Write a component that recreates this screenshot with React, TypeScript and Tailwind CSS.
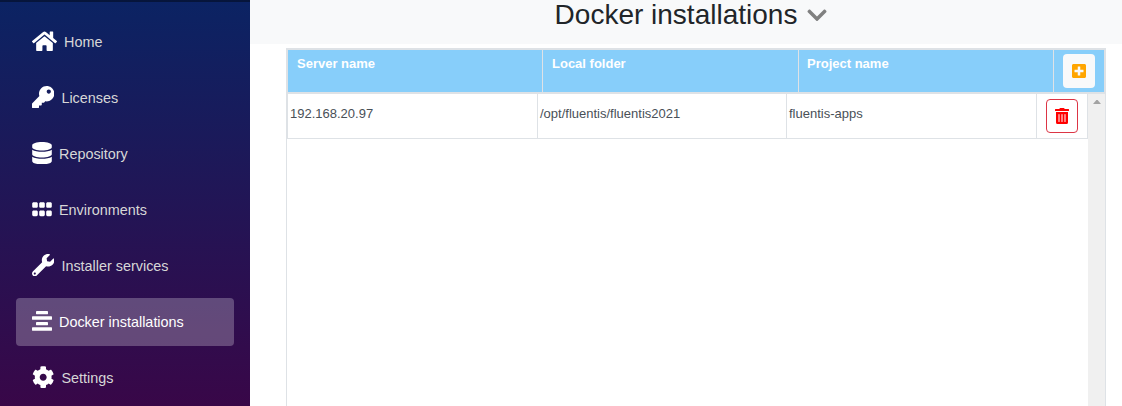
import type { ComponentType } from "react";
import {
  FaChevronDown,
  FaCog,
  FaDatabase,
  FaGripHorizontal,
  FaHome,
  FaKey,
  FaPlusSquare,
  FaTrashAlt,
  FaWrench,
} from "react-icons/fa";

type IconProps = { className?: string };
type NavItem = { label: string; icon: ComponentType<IconProps>; width: string; active?: boolean };

function CenteredBars({ className }: IconProps) {
  return (
    <svg className={className} viewBox="0 0 20 22.4" fill="currentColor">
      <rect x="4" y="1" width="12" height="3.2" rx="0.4" />
      <rect x="0" y="6.3" width="20" height="3.4" rx="0.4" />
      <rect x="4" y="12" width="12" height="3.2" rx="0.4" />
      <rect x="0" y="17.3" width="20" height="3.4" rx="0.4" />
    </svg>
  );
}

const navItems: NavItem[] = [
  { label: "Home", icon: FaHome, width: "w-[25px]" },
  { label: "Licenses", icon: FaKey, width: "w-[22.4px]" },
  { label: "Repository", icon: FaDatabase, width: "w-5" },
  { label: "Environments", icon: FaGripHorizontal, width: "w-5" },
  { label: "Installer services", icon: FaWrench, width: "w-[22.4px]" },
  { label: "Docker installations", icon: CenteredBars, width: "w-5", active: true },
  { label: "Settings", icon: FaCog, width: "w-[22.4px]" },
];

function Sidebar() {
  return (
    <aside className="flex w-[250px] shrink-0 flex-col bg-[linear-gradient(180deg,#052767_-54px,#3a0647_420px)]">
      <div className="h-0.5 shrink-0 bg-black/40" />
      <nav className="flex flex-col gap-2 px-4 pt-4">
        {navItems.map(({ label, icon: Icon, width, active }) => (
          <a
            key={label}
            className={`flex h-12 shrink-0 items-center gap-[7px] rounded-[4px] pl-4 text-[14.4px] ${
              active ? "bg-white/25 text-white" : "text-[#d7d7d7]"
            }`}
          >
            <Icon className={`mb-[2px] h-[22.4px] shrink-0 text-white ${width}`} />
            <span className="pt-[2px]">{label}</span>
          </a>
        ))}
      </nav>
    </aside>
  );
}

function Grid() {
  return (
    <section className="mt-1 ml-9 flex h-[370px] w-[820px] shrink-0 flex-col border border-[#dee2e6] text-[13px]">
      <div className="flex h-[45px] shrink-0 border border-b-2 border-[#dee2e6] bg-[#87cefa] font-bold text-white">
        <div className="w-[255px] border-r border-[#dee2e6] pt-1 pl-[9px]">Server name</div>
        <div className="w-[256px] border-r border-[#dee2e6] pt-1 pl-[9px]">Local folder</div>
        <div className="w-[255px] border-r border-[#dee2e6] pt-1 pl-2">Project name</div>
        <div className="flex flex-1 items-center justify-center">
          <button className="flex h-[34px] w-8 items-center justify-center rounded-[4px] bg-[#f8f9fa]">
            <FaPlusSquare className="size-4 text-[#ffa500]" />
          </button>
        </div>
      </div>
      <div className="flex flex-1">
        <div className="w-[801px]">
          <div className="flex h-[45px] border-r border-b border-l border-[#dee2e6] text-[#495057]">
            <div className="w-[250px] border-r border-[#dee2e6] pt-[10px] pl-0.5">192.168.20.97</div>
            <div className="w-[249px] border-r border-[#dee2e6] pt-[10px] pl-0.5">/opt/fluentis/fluentis2021</div>
            <div className="w-[250px] border-r border-[#dee2e6] pt-[10px] pl-0.5">fluentis-apps</div>
            <div className="flex flex-1 items-center justify-center">
              <button className="flex h-[34px] w-8 items-center justify-center rounded-[4px] border border-[#dc3545]">
                <FaTrashAlt className="size-4 text-[#ff0000]" />
              </button>
            </div>
          </div>
        </div>
        <div className="flex flex-1 justify-center bg-[#f0f0f0] pt-1.5">
          <svg width="8" height="4" viewBox="0 0 8 4" fill="#a3a3a3">
            <path d="M3.4 0H4.6L8 4H0Z" />
          </svg>
        </div>
      </div>
    </section>
  );
}

export default function App() {
  return (
    <div className="flex h-[406px] w-[1122px] overflow-hidden bg-white font-['Liberation_Sans',Arial,sans-serif]">
      <Sidebar />
      <main className="flex flex-1 flex-col">
        <header className="flex h-11 shrink-0 justify-center gap-2 bg-[#f8f9fa] pl-3">
          <h1 className="-mt-1.5 text-[28px] leading-[42px] text-[#212529]">Docker installations</h1>
          <FaChevronDown className="mt-1 h-[22.4px] w-6 text-[#808080]" />
        </header>
        <Grid />
      </main>
    </div>
  );
}
